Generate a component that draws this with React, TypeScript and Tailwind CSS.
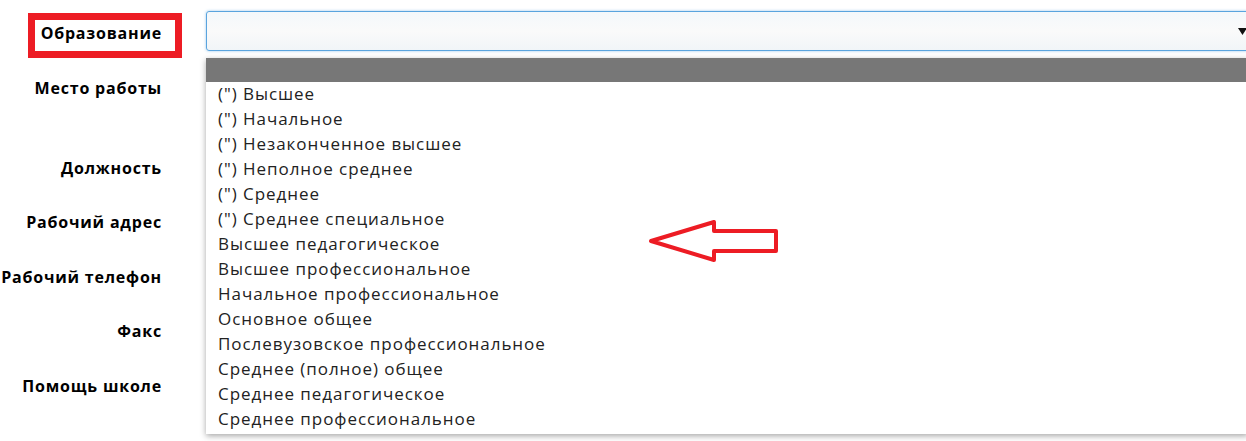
import React from "react";

const labels: { text: string; h: string }[] = [
  { text: "Образование", h: "h-[55px]" },
  { text: "Место работы", h: "h-[80px]" },
  { text: "Должность", h: "h-[54px]" },
  { text: "Рабочий адрес", h: "h-[55px]" },
  { text: "Рабочий телефон", h: "h-[54px]" },
  { text: "Факс", h: "h-[55px]" },
  { text: "Помощь школе", h: "h-[54px]" },
];

const options = [
  '(") Высшее',
  '(") Начальное',
  '(") Незаконченное высшее',
  '(") Неполное среднее',
  '(") Среднее',
  '(") Среднее специальное',
  "Высшее педагогическое",
  "Высшее профессиональное",
  "Начальное профессиональное",
  "Основное общее",
  "Послевузовское профессиональное",
  "Среднее (полное) общее",
  "Среднее педагогическое",
  "Среднее профессиональное",
];

export default function App() {
  return (
    <div
      className="relative w-[1246px] h-[441px] overflow-hidden bg-white text-[#222]"
      style={{ fontFamily: '"Open Sans", "DejaVu Sans", sans-serif' }}
    >
      <div className="flex pt-[11px]">
        {/* label column */}
        <div className="w-[162px] shrink-0 flex flex-col">
          {labels.map((l) => (
            <div
              key={l.text}
              className={`${l.h} flex justify-end items-start pt-[10px] whitespace-nowrap text-[16px] font-bold tracking-[0.8px] text-black`}
            >
              {l.text}
            </div>
          ))}
        </div>

        {/* field column */}
        <div className="ml-[44px] flex-1 relative">
          <div className="h-[40px] w-[1044px] rounded-[3px] border border-[#5aa4de] bg-gradient-to-b from-[#f4f8fb] via-[#fafafa] to-[#f1f5f8] shadow-[0_0_3px_rgba(90,164,222,0.6)] flex items-center justify-end pr-[1px]">
            <svg width="9" height="7" viewBox="0 0 9 7" className="mr-[1px]">
              <path d="M0 0H9L4.5 7Z" fill="#111" />
            </svg>
          </div>

          {/* open option list */}
          <div className="absolute left-0 top-[47px] w-[1042px] bg-white shadow-[0_2px_6px_rgba(0,0,0,0.35)] pb-[3px]">
            <div className="h-[24px] bg-[#777777]" />
            <ul className="-mt-px">
              {options.map((o) => (
                <li key={o} className="h-[25px] leading-[25px] pl-[12px] text-[17px] tracking-[0.95px] text-[#222]">
                  {o}
                </li>
              ))}
            </ul>
          </div>
        </div>
      </div>

      {/* annotation: frame around the field label */}
      <div className="absolute left-[28px] top-[13px] w-[154px] h-[45px] border-[7px] border-[#ed1c24]" />

      {/* annotation: arrow pointing at the list */}
      <svg className="absolute left-0 top-0" width="1246" height="441">
        <polygon
          points="651,241 714,222 714,231 776,231 776,251 714,251 714,260"
          fill="none"
          stroke="#ed1c24"
          strokeWidth="4"
          strokeLinejoin="round"
        />
      </svg>
    </div>
  );
}
